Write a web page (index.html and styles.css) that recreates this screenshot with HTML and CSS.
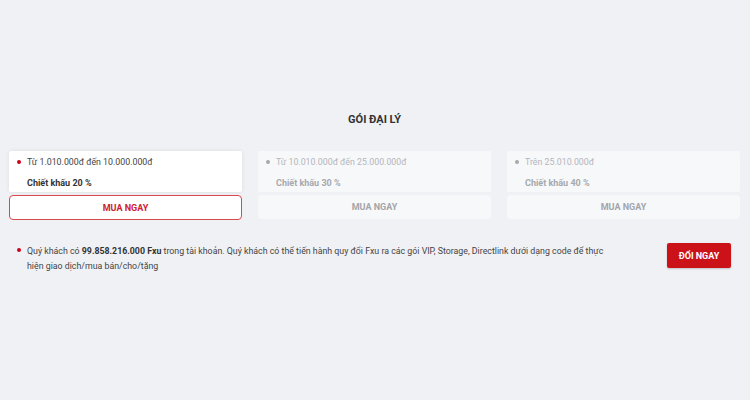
FILE: index.html
```html
<!DOCTYPE html>
<html lang="vi">
<head>
<meta charset="utf-8">
<link rel="stylesheet" href="styles.css">
</head>
<body>
<main class="page">
  <h2 class="title">GÓI ĐẠI LÝ</h2>
  <div class="plans">
    <div class="plan active">
      <div class="plan-info">
        <div class="range"><span class="dot"></span>Từ 1.010.000đ đến 10.000.000đ</div>
        <div class="discount">Chiết khấu 20 %</div>
      </div>
      <button class="buy">MUA NGAY</button>
    </div>
    <div class="plan">
      <div class="plan-info">
        <div class="range"><span class="dot"></span>Từ 10.010.000đ đến 25.000.000đ</div>
        <div class="discount">Chiết khấu 30 %</div>
      </div>
      <button class="buy">MUA NGAY</button>
    </div>
    <div class="plan">
      <div class="plan-info">
        <div class="range"><span class="dot"></span>Trên 25.010.000đ</div>
        <div class="discount">Chiết khấu 40 %</div>
      </div>
      <button class="buy">MUA NGAY</button>
    </div>
  </div>
  <div class="exchange">
    <span class="dot red"></span>
    <p class="note">Quý khách có <b>99.858.216.000 Fxu</b> trong tài khoản. Quý khách có thể tiến hành quy đổi Fxu ra các gói VIP, Storage, Directlink dưới dạng code để thực hiện giao dịch/mua bán/cho/tặng</p>
    <button class="swap">ĐỔI NGAY</button>
  </div>
</main>
</body>
</html>
```

FILE: styles.css
```css
html, body {
  margin: 0;
  padding: 0;
  background: #f0f1f5;
  font-family: Roboto, "Liberation Sans", sans-serif;
  color: #333;
}
.page {
  width: 750px;
  height: 400px;
  box-sizing: border-box;
  padding: 112px 10px 0 9px;
}
.title {
  margin: 0 0 23px;
  text-align: center;
  font-size: 11px;
  font-weight: 700;
  color: #333;
  line-height: 16px;
}
.plans {
  display: grid;
  grid-template-columns: repeat(3, 233px);
  column-gap: 16px;
}
.plan {
  display: flex;
  flex-direction: column;
  gap: 3px;
}
.plan-info {
  background: #f7f8fa;
  border-radius: 2px;
  padding: 5px 0 0 8px;
  height: 36px;
}
.plan.active .plan-info {
  background: #fff;
  box-shadow: 0 0 4px rgba(0,0,0,0.08);
}
.range {
  display: flex;
  align-items: center;
  font-size: 8.8px;
  line-height: 12px;
  color: #b4b6ba;
}
.plan.active .range { color: #444; }
.dot {
  width: 4px;
  height: 4px;
  border-radius: 50%;
  background: #a8a8a8;
  margin-right: 6px;
  flex: none;
}
.plan.active .dot, .dot.red { background: #d0021b; }
.discount {
  margin: 9px 0 0 10px;
  font-size: 9px;
  font-weight: 700;
  line-height: 12px;
  color: #a6a8ad;
}
.plan.active .discount { color: #333; }
.buy {
  height: 24px;
  border: 1px solid transparent;
  border-radius: 4px;
  background: #f7f8fa;
  font-family: inherit;
  font-size: 9px;
  font-weight: 700;
  color: #a3a5aa;
  padding: 0;
}
.plan.active .buy {
  background: #fff;
  border-color: #d9484f;
  color: #d0202e;
  height: 25px;
}
.exchange {
  display: flex;
  align-items: flex-start;
  margin-top: 24px;
  padding-left: 8px;
}
.exchange .dot { margin-top: 4px; }
.note {
  margin: 0;
  width: 590px;
  font-size: 8.8px;
  line-height: 15px;
  color: #444;
}
.note b { color: #333; }
.swap {
  margin-left: auto;
  margin-right: 9px;
  margin-top: -1px;
  width: 64px;
  height: 25px;
  border: none;
  border-radius: 2px;
  background: #cc1219;
  color: #fff;
  font-family: inherit;
  font-size: 9px;
  font-weight: 700;
  box-shadow: 0 1px 2px rgba(0,0,0,0.2);
  padding: 0;
}
```
